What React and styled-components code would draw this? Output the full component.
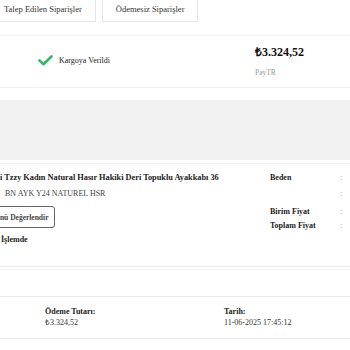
import React from "react";
import styled, { createGlobalStyle } from "styled-components";

const Global = createGlobalStyle`
  html, body { margin: 0; padding: 0; background: #fff; }
  body { width: 350px; height: 350px; overflow: hidden; font-family: "Liberation Serif", "Times New Roman", serif; color: #222; }
`;

const Page = styled.div`
  width: 350px;
  overflow: hidden;
`;

const Tabs = styled.div`
  display: flex;
  gap: 6px;
  margin: -4px 0 0 -10px;
`;

const Tab = styled.div`
  border: 1px solid #e6e6e6;
  padding: 7px 13px;
  font-size: 8.5px;
  line-height: 10px;
  color: #333;
  white-space: nowrap;
  background: #fff;
`;

const OrderHeader = styled.div`
  margin-top: 13px;
  height: 42px;
  border-top: 1px solid #efefef;
  border-bottom: 1px solid #efefef;
  display: flex;
  align-items: flex-start;
  padding-top: 9px;
  box-sizing: content-box;
`;

const Status = styled.div`
  margin: 10px 0 0 38px;
  width: 217px;
  display: flex;
  align-items: center;
  gap: 6px;
  font-size: 8px;
  line-height: 10px;
  color: #222;
`;

const PriceBlock = styled.div`
  display: flex;
  flex-direction: column;
`;

const Price = styled.div`
  font-size: 12px;
  line-height: 14px;
  font-weight: bold;
  color: #111;
`;

const Provider = styled.div`
  margin-top: 9px;
  font-size: 7.5px;
  line-height: 10px;
  color: #9a9a9a;
`;

const GrayBand = styled.div`
  margin-top: 12px;
  height: 60px;
  background: #f2f2f2;
`;

const ProductRow = styled.div`
  margin-top: 3px;
  border-top: 1px solid #f0f0f0;
  border-bottom: 1px solid #ececec;
  padding: 8px 0 20px;
  display: flex;
`;

const Info = styled.div`
  width: 270px;
  display: flex;
  flex-direction: column;
  align-items: flex-start;
`;

const Title = styled.div`
  font-size: 8.3px;
  line-height: 12px;
  font-weight: bold;
  color: #222;
  white-space: nowrap;
`;

const Code = styled.div`
  margin: 4px 0 0 5px;
  font-size: 8px;
  line-height: 12px;
  color: #444;
  white-space: nowrap;
`;

const RateButton = styled.button`
  margin: 6px 0 0 -20px;
  height: 22px;
  padding: 0 6px;
  border: 1px solid #666;
  border-radius: 3px;
  background: #fff;
  font-family: inherit;
  font-size: 7.5px;
  font-weight: bold;
  color: #444;
  white-space: nowrap;
`;

const State = styled.div`
  margin: 6px 0 0 1px;
  font-size: 8px;
  line-height: 12px;
  font-weight: bold;
  color: #222;
`;

const Specs = styled.div`
  display: flex;
  flex-direction: column;
`;

const SpecRow = styled.div`
  display: flex;
  margin-top: ${(p) => p.$gap}px;
  font-size: 8px;
  line-height: 12px;
`;

const SpecLabel = styled.div`
  width: 70px;
  font-weight: bold;
  color: #222;
  white-space: nowrap;
`;

const Colon = styled.div`
  color: #999;
`;

const Spacer = styled.div`
  margin-top: 2px;
  height: 26px;
  border-top: 1px solid #f0f0f0;
  border-bottom: 1px solid #ececec;
`;

const Payment = styled.div`
  display: grid;
  grid-template-columns: 179px 1fr;
  padding: 9px 0 10px 45px;
  border-bottom: 1px solid #ececec;
`;

const Field = styled.div`
  display: flex;
  flex-direction: column;
  font-size: 8px;
  line-height: 11px;
`;

const FieldLabel = styled.div`
  font-weight: bold;
  color: #222;
`;

const FieldValue = styled.div`
  color: #333;
`;

const Check = () => (
  <svg width="15" height="11" viewBox="0 0 15 11">
    <polyline
      points="1.5,5.5 5.5,9.2 13.5,1.5"
      fill="none"
      stroke="#2dbb6a"
      strokeWidth="2.6"
      strokeLinecap="round"
      strokeLinejoin="round"
    />
  </svg>
);

const specs = [
  { label: "Beden", gap: 0 },
  { label: "", gap: 4 },
  { label: "Birim Fiyat", gap: 6 },
  { label: "Toplam Fiyat", gap: 2 },
];

export default function App() {
  return (
    <Page>
      <Global />
      <Tabs>
        <Tab>Talep Edilen Siparişler</Tab>
        <Tab>Ödemesiz Siparişler</Tab>
      </Tabs>
      <OrderHeader>
        <Status>
          <Check />
          <span>Kargoya Verildi</span>
        </Status>
        <PriceBlock>
          <Price>₺3.324,52</Price>
          <Provider>PayTR</Provider>
        </PriceBlock>
      </OrderHeader>
      <GrayBand />
      <ProductRow>
        <Info>
          <Title>i Tzzy Kadın Natural Hasır Hakiki Deri Topuklu Ayakkabı 36</Title>
          <Code>BN AYK Y24 NATUREL HSR</Code>
          <RateButton>Ürünü Değerlendir</RateButton>
          <State>İşlemde</State>
        </Info>
        <Specs>
          {specs.map((s, i) => (
            <SpecRow key={i} $gap={s.gap}>
              <SpecLabel>{s.label}</SpecLabel>
              <Colon>:</Colon>
            </SpecRow>
          ))}
        </Specs>
      </ProductRow>
      <Spacer />
      <Payment>
        <Field>
          <FieldLabel>Ödeme Tutarı:</FieldLabel>
          <FieldValue>₺3.324,52</FieldValue>
        </Field>
        <Field>
          <FieldLabel>Tarih:</FieldLabel>
          <FieldValue>11-06-2025 17:45:12</FieldValue>
        </Field>
      </Payment>
    </Page>
  );
}
